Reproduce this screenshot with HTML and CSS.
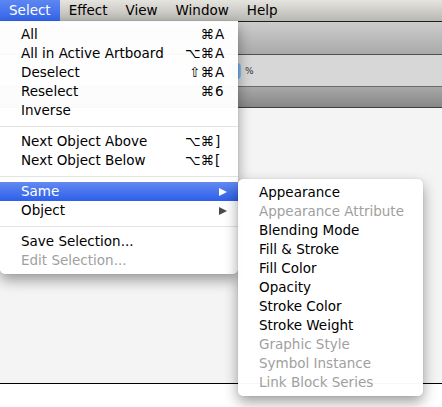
FILE: index.html
```html
<!DOCTYPE html>
<html>
<head>
<meta charset="utf-8">
<link rel="stylesheet" href="styles.css">
</head>
<body>
<div class="screen">
  <div class="menubar">
    <span class="mb-item active">Select</span>
    <span class="mb-item">Effect</span>
    <span class="mb-item">View</span>
    <span class="mb-item">Window</span>
    <span class="mb-item">Help</span>
  </div>
  <div class="toolbar"></div>
  <div class="controlbar">
    <span class="spinner"></span>
    <span class="pct">%</span>
  </div>
  <div class="tabbar"></div>
  <div class="canvas"></div>
  <div class="bottom"></div>

  <div class="menu main-menu">
    <div class="row"><span class="label">All</span><span class="mods">⌘</span><span class="key">A</span></div>
    <div class="row"><span class="label">All in Active Artboard</span><span class="mods">⌥⌘</span><span class="key">A</span></div>
    <div class="row"><span class="label">Deselect</span><span class="mods">⇧⌘</span><span class="key">A</span></div>
    <div class="row"><span class="label">Reselect</span><span class="mods">⌘</span><span class="key">6</span></div>
    <div class="row"><span class="label">Inverse</span></div>
    <div class="sep"></div>
    <div class="row"><span class="label">Next Object Above</span><span class="mods">⌥⌘</span><span class="key">]</span></div>
    <div class="row"><span class="label">Next Object Below</span><span class="mods">⌥⌘</span><span class="key">[</span></div>
    <div class="sep"></div>
    <div class="row selected"><span class="label">Same</span><span class="mods"></span><span class="key"><i class="arrow"></i></span></div>
    <div class="row"><span class="label">Object</span><span class="mods"></span><span class="key"><i class="arrow"></i></span></div>
    <div class="sep"></div>
    <div class="row"><span class="label">Save Selection...</span></div>
    <div class="row disabled"><span class="label">Edit Selection...</span></div>
  </div>

  <div class="menu sub-menu">
    <div class="row"><span class="label">Appearance</span></div>
    <div class="row disabled"><span class="label">Appearance Attribute</span></div>
    <div class="row"><span class="label">Blending Mode</span></div>
    <div class="row"><span class="label">Fill &amp; Stroke</span></div>
    <div class="row"><span class="label">Fill Color</span></div>
    <div class="row"><span class="label">Opacity</span></div>
    <div class="row"><span class="label">Stroke Color</span></div>
    <div class="row"><span class="label">Stroke Weight</span></div>
    <div class="row disabled"><span class="label">Graphic Style</span></div>
    <div class="row disabled"><span class="label">Symbol Instance</span></div>
    <div class="row disabled"><span class="label">Link Block Series</span></div>
  </div>
</div>
</body>
</html>
```

FILE: styles.css
```css
* { box-sizing: border-box; }
html, body {
  margin: 0;
  padding: 0;
  background: #fff;
}
body {
  font-family: "DejaVu Sans", "Liberation Sans", sans-serif;
  font-size: 13.5px;
  color: #000;
}
.screen {
  position: relative;
  width: 442px;
  height: 407px;
  overflow: hidden;
  display: flex;
  flex-direction: column;
}
.menubar {
  height: 22px;
  flex: none;
  display: flex;
  align-items: stretch;
  background: linear-gradient(#e6e4de, #b9b7b1);
  border-bottom: 1px solid #1e1e1e;
}
.mb-item {
  padding: 0 9px;
  line-height: 21px;
  color: #000;
}
.mb-item.active {
  color: #fff;
  background: linear-gradient(#5d86f2, #3466ec);
}
.toolbar {
  height: 33px;
  flex: none;
  background: linear-gradient(#cdcdcd, #a9a9a9);
  border-bottom: 1px solid #505050;
}
.controlbar {
  height: 32px;
  flex: none;
  background: #d7d7d7;
  border-bottom: 1px solid #6a6a6a;
  display: flex;
  align-items: center;
  padding-left: 232px;
}
.spinner {
  width: 9px;
  height: 16px;
  border-radius: 4px;
  background: linear-gradient(90deg, #2f7fd8, #8ac0f4);
  margin-top: 1px;
}
.pct {
  font-size: 9px;
  color: #333;
  margin-left: 4px;
  margin-top: 1px;
}
.tabbar {
  height: 21px;
  flex: none;
  background: linear-gradient(#a8a8a8, #878787);
  border-bottom: 1px solid #3e3e3e;
}
.canvas {
  height: 276px;
  flex: none;
  background: #f4f4f4;
  border-bottom: 1px solid #000;
}
.bottom {
  flex: 1;
  background: #fff;
}

.menu {
  position: absolute;
  background: rgba(255, 255, 255, 0.97);
  box-shadow: 0 6px 14px rgba(0, 0, 0, 0.38), 0 0 1px rgba(0, 0, 0, 0.3);
  padding: 4px 0;
}
.main-menu {
  left: 0;
  top: 21px;
  width: 238px;
  border-radius: 0 0 5px 5px;
}
.sub-menu {
  left: 238px;
  top: 179px;
  width: 185px;
  border-radius: 5px;
}
.row {
  height: 19px;
  line-height: 19px;
  display: grid;
  grid-template-columns: 1fr 40px 23px;
  padding-left: 21px;
  white-space: nowrap;
}
.sub-menu .row {
  padding-left: 21px;
  grid-template-columns: 1fr;
}
.mods {
  text-align: right;
  padding-right: 1px;
}
.key {
  display: flex;
  align-items: center;
}
.row.disabled { color: #a0a0a0; }
.row.selected {
  color: #fff;
  background: linear-gradient(#6389f2, #2d5fe9);
}
.sep {
  height: 12px;
  display: flex;
  align-items: center;
}
.sep::before {
  content: "";
  display: block;
  width: 100%;
  height: 1px;
  background: #e3e3e3;
}
.arrow {
  display: block;
  width: 0;
  height: 0;
  margin-left: 4px;
  border-left: 8px solid #4a4a4a;
  border-top: 4.5px solid transparent;
  border-bottom: 4.5px solid transparent;
}
.selected .arrow { border-left-color: #fff; }
```
